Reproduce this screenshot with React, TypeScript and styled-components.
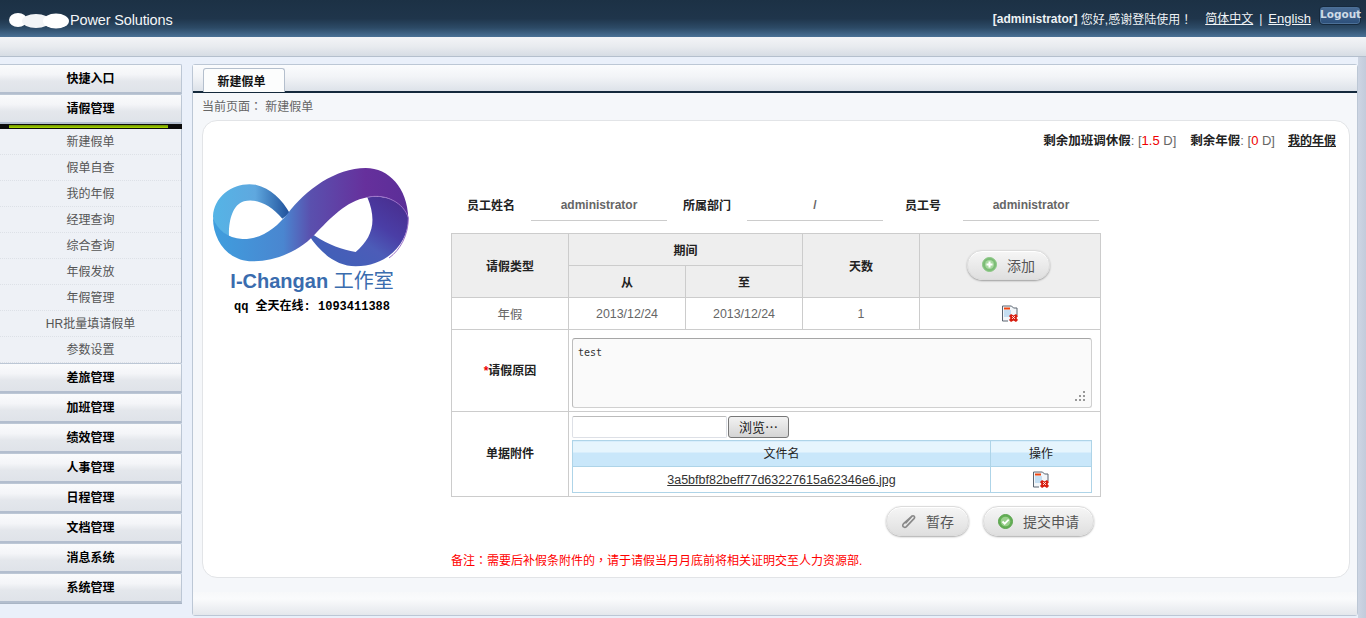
import React from "react";
import styled, { createGlobalStyle } from "styled-components";

const FONT = `"Liberation Sans", "Noto Sans CJK SC", sans-serif`;

const Global = createGlobalStyle`
  html, body { margin: 0; padding: 0; background: #eaf0fa; }
  body { font: 12px ${FONT}; color: #555; width: 1366px; height: 618px; overflow: hidden; }
  * { box-sizing: border-box; }
`;

const Page = styled.div`
  width: 1366px;
  height: 618px;
  display: flex;
  flex-direction: column;
  overflow: hidden;
`;
const Header = styled.header`
  height: 37px;
  flex: none;
  background: linear-gradient(#1c3145 0, #1f354b 50%, #2c4a66 75%, #4a7196 100%);
  display: flex;
  align-items: flex-start;
  justify-content: space-between;
  padding: 0 5px 0 8px;
  color: #fff;
`;
const Brand = styled.div`
  display: flex;
  align-items: center;
  height: 40px;
  font-size: 14.5px;
  color: #f4f6f8;
  letter-spacing: -0.15px;
`;
const Smudge = styled.svg`
  width: 62px;
  height: 18px;
  display: block;
`;
const UserBar = styled.div`
  display: flex;
  align-items: flex-start;
  font-size: 12px;
  color: #eef2f5;
  padding-top: 12px;
  line-height: 14px;
`;
const UserName = styled.b`
  font-weight: bold;
`;
const LangLink = styled.a<{ $latin?: boolean }>`
  color: #f2f5f8;
  text-decoration: underline;
  font-size: ${(p) => (p.$latin ? 13 : 12)}px;
`;
const Sep = styled.span`
  margin: 0 6px;
`;
const Greeting = styled.span`
  margin-right: 13px;
`;
const Punct = styled.span`
  font-family: "Noto Sans CJK TC", sans-serif;
`;
const Logout = styled.button`
  width: 42px;
  height: 19px;
  margin: -6px 0 0 8px;
  padding: 0 0 3px;
  border: 1px solid #15293d;
  border-radius: 4px;
  background: linear-gradient(#4a6d96, #2c4f7a);
  box-shadow: inset 0 0 0 1px #4c7097;
  color: #cfdbe6;
  font: bold 10.5px "DejaVu Sans", sans-serif;
`;
const SubBar = styled.div`
  height: 20px;
  flex: none;
  background: linear-gradient(#f3f4f7, #e8ebef 50%, #d6dce4);
  border-bottom: 1px solid #b4bfcd;
`;
const Body = styled.div`
  flex: 1;
  display: flex;
  gap: 10px;
  padding: 7px 8px 0 0;
  min-height: 0;
  background: linear-gradient(90deg, #eaf0fa 0, #eaf0fa 1358px, #cdd5e3 1358px, #c2cbdb 1366px);
`;
const Sidebar = styled.nav`
  width: 182px;
  flex: none;
  align-self: flex-start;
  border-bottom: 1px solid #a9b5c5;
`;
const Head = styled.div`
  height: 30px;
  display: flex;
  align-items: center;
  justify-content: center;
  padding-bottom: 2px;
  font-weight: bold;
  font-size: 12px;
  color: #000;
  border: 1px solid #bcc7d5;
  border-left: 0;
  border-bottom: 2px solid #b3bece;
  border-radius: 0 2px 0 0;
  background: linear-gradient(#fafbfc 0, #f4f5f8 35%, #e4e7ec 60%, #dfe3e9 100%);
`;
const ActiveBar = styled.div`
  height: 5px;
  background: #0b0b0b;
  padding: 1px 14px 1px 9px;
  &::before {
    content: "";
    display: block;
    height: 3px;
    background: linear-gradient(#6c8e00, #a8d800);
  }
`;
const SubList = styled.div`
  background: #eef1f6;
  border-right: 1px solid #b3bece;
`;
const SubItem = styled.div`
  height: 26px;
  display: flex;
  align-items: center;
  justify-content: center;
  padding-bottom: 2px;
  color: #555;
  font-size: 12px;
  border-bottom: 1px dotted #dde1e7;
`;
const Main = styled.main`
  flex: 1;
  height: 552px;
  display: flex;
  flex-direction: column;
  border: 1px solid #bcc7d5;
  border-radius: 3px;
  background: #f5f7fa;
`;
const TabBar = styled.div`
  height: 28px;
  flex: none;
  display: flex;
  align-items: flex-end;
  padding-left: 10px;
  background: linear-gradient(#fbfcfd 0, #f2f4f7 45%, #dde2e9 100%);
  border-bottom: 2px solid #14293c;
`;
const Tab = styled.div`
  width: 82px;
  height: 24px;
  margin-bottom: -1px;
  padding-right: 5px;
  display: flex;
  align-items: center;
  justify-content: center;
  font-weight: bold;
  color: #111;
  background: #fcfdfd;
  border: 1px solid #b4bfcd;
  border-bottom: 0;
  border-radius: 3px 3px 0 0;
`;
const Crumb = styled.div`
  height: 27px;
  flex: none;
  padding: 0 0 1px 9px;
  line-height: 26px;
  color: #666;
`;
const Card = styled.section`
  height: 458px;
  margin: 0 7px 0 9px;
  background: #fff;
  border: 1px solid #e2e4e7;
  border-radius: 15px;
  flex: none;
`;
const MainFoot = styled.div`
  flex: 1;
  margin-top: 14px;
  background: linear-gradient(#f7f8fa 0, #fafbfc 30%, #e4e7ec 100%);
`;
const Quota = styled.div`
  height: 47px;
  display: flex;
  justify-content: flex-end;
  align-items: flex-start;
  padding: 13px 13px 0 0;
  color: #666;
  font-size: 13px;
  line-height: 14px;
`;
const QuotaLabel = styled.b`
  color: #222;
  font-size: 12.5px;
  margin-left: 14px;
`;
const Num = styled.span`
  color: #e00;
`;
const QuotaLink = styled.a`
  color: #222;
  font-size: 12px;
  font-weight: bold;
  text-decoration: underline;
  margin-left: 13px;
`;
const Columns = styled.div`
  display: grid;
  grid-template-columns: 248px 650px;
`;
const LogoCol = styled.div`
  display: flex;
  flex-direction: column;
  align-items: center;
  width: 200px;
  margin-left: 9px;
`;
const LogoMark = styled.svg`
  display: block;
  width: 240px;
  height: 160px;
  margin: -10px 0 -50px 13px;
`;
const LogoTitle = styled.div`
  color: #3a6cae;
  font: bold 20px ${FONT};
  line-height: 24px;
  height: 24px;
  margin-top: 1px;
`;
const LogoCjk = styled.span`
  font-weight: normal;
`;
const LogoQQ = styled.div`
  color: #000;
  font: bold 12px "Liberation Mono", "Noto Sans CJK SC", monospace;
  margin-top: 7px;
  line-height: 14px;
  white-space: nowrap;
`;
const FormCol = styled.div`
  display: flex;
  flex-direction: column;
  padding-top: 20px;
`;
const InfoRow = styled.div`
  display: grid;
  grid-template-columns: 80px 136px 80px 136px 80px 136px;
  height: 33px;
  margin-bottom: 12px;
`;
const InfoLabel = styled.div`
  display: flex;
  align-items: center;
  justify-content: center;
  font-weight: bold;
  color: #222;
  padding-bottom: 1px;
`;
const InfoValue = styled.div`
  display: flex;
  align-items: center;
  justify-content: center;
  font-weight: bold;
  color: #666;
  border-bottom: 1px solid #ccc;
  padding-top: 1px;
`;
const FormTable = styled.table`
  width: 649px;
  border-collapse: collapse;
  table-layout: fixed;
  font-size: 12px;
  td, th { border: 1px solid #ccc; text-align: center; padding: 0; }
`;
const HeadCell = styled.th`
  background: #eee;
  color: #222;
  font-weight: bold;
  height: 32px;
`;
const DataCell = styled.td`
  height: 32px;
  color: #666;
  font-size: 12.4px;
`;
const SideCell = styled.th`
  font-weight: bold;
  color: #222;
  background: #fff;
  padding: 0 0 3px !important;
`;
const Star = styled.span`
  color: #e00;
`;
const PadCell = styled.td`
  padding: 4px 8px 3px 3px !important;
  text-align: left !important;
  vertical-align: top;
`;
const AreaWrap = styled.div`
  position: relative;
  height: 70px;
  margin: 4px 0 0;
`;
const Area = styled.textarea`
  display: block;
  width: 100%;
  height: 100%;
  resize: none;
  padding: 8px 5px;
  border: 1px solid #d0d0d0;
  border-top-color: #a6a6a6;
  border-left-color: #bdbdbd;
  border-radius: 3px;
  background: #fafafa;
  color: #333;
  font: 10px "DejaVu Sans Mono", monospace;
`;
const Grip = styled.svg`
  position: absolute;
  right: 6px;
  bottom: 6px;
  width: 12px;
  height: 12px;
`;
const FileRow = styled.div`
  display: flex;
  align-items: center;
  height: 22px;
  gap: 1px;
  margin-bottom: 2px;
`;
const FileInput = styled.input`
  width: 155px;
  height: 22px;
  border: 1px solid #dde0e6;
  border-top-color: #bbb;
  border-radius: 2px;
  background: #fff;
`;
const Browse = styled.button`
  width: 61px;
  height: 22px;
  padding: 0 0 2px;
  border: 1px solid #777;
  border-radius: 3px;
  background: linear-gradient(#f2f2f2, #d4d4d4);
  color: #222;
  font: 13px ${FONT};
`;
const FileTable = styled.table`
  width: 519px;
  border-collapse: collapse;
  table-layout: fixed;
  td, th { border: 1px solid #aed4e8 !important; text-align: center; padding: 0; }
`;
const FileHead = styled.th`
  height: 26px;
  padding-bottom: 2px !important;
  font-weight: normal;
  color: #222;
  background: linear-gradient(#e6f5fd 0, #e6f5fd 45%, #c9e7fa 45%, #c9e7fa 100%);
`;
const FileCell = styled.td`
  height: 26px;
  color: #444;
`;
const FileLink = styled.a`
  color: #333;
  font-size: 12.5px;
  text-decoration: underline;
`;
const Actions = styled.div`
  display: flex;
  justify-content: flex-end;
  gap: 14px;
  padding: 9px 7px 0 0;
`;
const Pill = styled.button<{ $w: number }>`
  width: ${(p) => p.$w}px;
  height: 30px;
  padding: 0;
  display: flex;
  align-items: center;
  justify-content: center;
  gap: 10px;
  border: 1px solid #dcdcdc;
  border-radius: 15px;
  background: linear-gradient(#f6f6f6, #dfdfdf);
  box-shadow: 0 1px 2px rgba(0, 0, 0, 0.35), inset 0 1px 0 #fff;
  color: #555;
  font: 14px ${FONT};
`;
const HeadPill = styled(Pill)`
  margin: -2px 0 0 47px;
`;
const Note = styled.div`
  color: #f00;
  margin-top: 16px;
  line-height: 16px;
`;
const Icon = styled.svg`
  display: inline-block;
  vertical-align: middle;
`;

const DeleteIcon = () => (
  <Icon width="18" height="17" viewBox="0 0 18 17" aria-hidden="true">
    <path d="M1.5 1h9l2 2h3.5v13H1.5z" fill="#f3f6f9" />
    <path d="M7 16H1.5V1h9l2 2h3.5v7" fill="none" stroke="#5a6470" strokeWidth="1" />
    <rect x="3" y="2.5" width="6" height="2" fill="#ee4410" />
    <rect x="3" y="5" width="7" height="7" fill="#c4def2" />
    <path d="M10 9l2.5 1.5L15 9l2 2-1.5 2 1.5 2-2 2-2.5-1.5L10 17l-2-2 1.5-2L8 11z" fill="#d81e10" />
    <path d="M11 11l3 3M14 11l-3 3" stroke="#fff" strokeWidth="0.8" />
  </Icon>
);

const PlusIcon = () => (
  <Icon width="15" height="15" viewBox="0 0 15 15" aria-hidden="true">
    <circle cx="7.5" cy="7.5" r="7" fill="#7cbc76" stroke="#8cc886" />
    <circle cx="7.5" cy="7.5" r="4.5" fill="#a8d8a0" />
    <path d="M7.5 4.5v6M4.5 7.5h6" stroke="#fff" strokeWidth="2" />
  </Icon>
);

const CheckIcon = () => (
  <Icon width="15" height="15" viewBox="0 0 15 15" aria-hidden="true">
    <circle cx="7.5" cy="7.5" r="7" fill="#63ae55" stroke="#5aa34c" />
    <circle cx="7.5" cy="7.5" r="4.8" fill="#9ad08c" />
    <path d="M4.5 7.5l2.2 2.2 4-4" stroke="#fff" strokeWidth="1.8" fill="none" />
  </Icon>
);

const ClipIcon = () => (
  <Icon width="15" height="15" viewBox="0 0 15 15" aria-hidden="true">
    <path
      d="M11.5 1.5L2.6 9.6c-1.2 1.2-1 2.5-.2 3.2.8.8 2 .8 3-.2l7.6-8c.8-.9.7-1.8.1-2.4-.7-.6-1.5-.6-2.3.2L4.6 9.2"
      fill="none"
      stroke="#888"
      strokeWidth="1.6"
    />
  </Icon>
);

const menuTop = ["快捷入口", "请假管理"];
const subItems = ["新建假单", "假单自查", "我的年假", "经理查询", "综合查询", "年假发放", "年假管理", "HR批量填请假单", "参数设置"];
const menuBottom = ["差旅管理", "加班管理", "绩效管理", "人事管理", "日程管理", "文档管理", "消息系统", "系统管理"];

export default function App() {
  return (
    <Page>
      <Global />
      <Header>
        <Brand>
          <Smudge viewBox="0 0 62 18" aria-hidden="true">
            <ellipse cx="10" cy="9" rx="9" ry="7" fill="#fff" />
            <ellipse cx="28" cy="10" rx="14" ry="7" fill="#f2f4f6" />
            <ellipse cx="48" cy="10" rx="13" ry="7.5" fill="#fff" />
          </Smudge>
          <span>Power Solutions</span>
        </Brand>
        <UserBar>
          <UserName>[administrator]</UserName>
          <Greeting>
            &nbsp;您好,感谢登陆使用<Punct>！</Punct>
          </Greeting>
          <LangLink>简体中文</LangLink>
          <Sep>|</Sep>
          <LangLink $latin>English</LangLink>
          <Logout>Logout</Logout>
        </UserBar>
      </Header>
      <SubBar />
      <Body>
        <Sidebar>
          {menuTop.map((m) => (
            <Head key={m}>{m}</Head>
          ))}
          <ActiveBar />
          <SubList>
            {subItems.map((s) => (
              <SubItem key={s}>{s}</SubItem>
            ))}
          </SubList>
          {menuBottom.map((m) => (
            <Head key={m}>{m}</Head>
          ))}
        </Sidebar>
        <Main>
          <TabBar>
            <Tab>新建假单</Tab>
          </TabBar>
          <Crumb>
            当前页面<Punct>：</Punct> 新建假单
          </Crumb>
          <Card>
            <Quota>
              <QuotaLabel>剩余加班调休假</QuotaLabel>:&nbsp;[<Num>1.5</Num>&nbsp;D]
              <QuotaLabel>剩余年假</QuotaLabel>:&nbsp;[<Num>0</Num>&nbsp;D]
              <QuotaLink>我的年假</QuotaLink>
            </Quota>
            <Columns>
              <LogoCol>
                <LogoMark viewBox="0 0 720 480" aria-hidden="true">
                  <defs>
                    <linearGradient id="lg1" x1="0" y1="0" x2="1" y2="0">
                      <stop offset="0" stopColor="#55b4e6" />
                      <stop offset="0.55" stopColor="#5fa8df" />
                      <stop offset="1" stopColor="#1f4f9a" />
                    </linearGradient>
                    <linearGradient id="lg2" x1="0" y1="0" x2="1" y2="0">
                      <stop offset="0" stopColor="#3f9ede" />
                      <stop offset="0.36" stopColor="#4a86d0" />
                      <stop offset="0.5" stopColor="#5a50ae" />
                      <stop offset="0.78" stopColor="#66309c" />
                      <stop offset="1" stopColor="#5b2e98" />
                    </linearGradient>
                    <linearGradient id="lg3" x1="0" y1="1" x2="1" y2="0">
                      <stop offset="0" stopColor="#3c62b8" />
                      <stop offset="0.45" stopColor="#4c5cb8" />
                      <stop offset="0.65" stopColor="#4a3ea6" />
                      <stop offset="1" stopColor="#492a8a" />
                    </linearGradient>
                  </defs>
                  <path
                    d="M42 175C45 110 110 70 170 80C215 90 250 125 272 165L250 182C215 140 170 120 135 130C100 140 88 190 90 238C60 215 42 200 42 175Z"
                    fill="url(#lg1)"
                  />
                  <path
                    d="M330 232L345 232C390 262 430 275 470 282C520 240 535 190 505 118C560 110 620 130 628 180C628 260 560 325 470 325C410 325 360 280 330 232Z"
                    fill="url(#lg3)"
                  />
                  <path
                    d="M42 180C55 215 85 240 130 243C190 245 235 205 265 168C320 95 410 30 500 30C570 30 625 90 628 180C615 135 560 105 505 118C440 130 395 180 345 232C300 280 230 310 160 310C90 310 42 250 42 180Z"
                    fill="url(#lg2)"
                  />
                  <path d="M505 118C560 105 615 135 628 180C628 230 605 275 570 300" fill="none" stroke="#9a70c8" strokeWidth="3" />
                </LogoMark>
                <LogoTitle>
                  I-Changan <LogoCjk>工作室</LogoCjk>
                </LogoTitle>
                <LogoQQ>qq 全天在线: 1093411388</LogoQQ>
              </LogoCol>
              <FormCol>
                <InfoRow>
                  <InfoLabel>员工姓名</InfoLabel>
                  <InfoValue>administrator</InfoValue>
                  <InfoLabel>所属部门</InfoLabel>
                  <InfoValue>/</InfoValue>
                  <InfoLabel>员工号</InfoLabel>
                  <InfoValue>administrator</InfoValue>
                </InfoRow>
                <FormTable>
                  <colgroup>
                    <col width="117" />
                    <col width="117" />
                    <col width="117" />
                    <col width="117" />
                    <col width="181" />
                  </colgroup>
                  <tbody>
                    <tr>
                      <HeadCell rowSpan={2}>请假类型</HeadCell>
                      <HeadCell colSpan={2}>期间</HeadCell>
                      <HeadCell rowSpan={2}>天数</HeadCell>
                      <HeadCell rowSpan={2}>
                        <HeadPill $w={83} type="button">
                          <PlusIcon />
                          添加
                        </HeadPill>
                      </HeadCell>
                    </tr>
                    <tr>
                      <HeadCell>从</HeadCell>
                      <HeadCell>至</HeadCell>
                    </tr>
                    <tr>
                      <DataCell>年假</DataCell>
                      <DataCell>2013/12/24</DataCell>
                      <DataCell>2013/12/24</DataCell>
                      <DataCell>1</DataCell>
                      <DataCell>
                        <DeleteIcon />
                      </DataCell>
                    </tr>
                    <tr>
                      <SideCell>
                        <Star>*</Star>请假原因
                      </SideCell>
                      <PadCell colSpan={4}>
                        <AreaWrap>
                          <Area defaultValue="test" />
                          <Grip viewBox="0 0 12 12" aria-hidden="true">
                            <path d="M9 1h2v2H9zM5 5h2v2H5zM9 5h2v2H9zM1 9h2v2H1zM5 9h2v2H5zM9 9h2v2H9z" fill="#999" />
                          </Grip>
                        </AreaWrap>
                      </PadCell>
                    </tr>
                    <tr>
                      <SideCell>单据附件</SideCell>
                      <PadCell colSpan={4}>
                        <FileRow>
                          <FileInput />
                          <Browse type="button">浏览⋯</Browse>
                        </FileRow>
                        <FileTable>
                          <colgroup>
                            <col width="418" />
                            <col width="101" />
                          </colgroup>
                          <tbody>
                            <tr>
                              <FileHead>文件名</FileHead>
                              <FileHead>操作</FileHead>
                            </tr>
                            <tr>
                              <FileCell>
                                <FileLink>3a5bfbf82beff77d63227615a62346e6.jpg</FileLink>
                              </FileCell>
                              <FileCell>
                                <DeleteIcon />
                              </FileCell>
                            </tr>
                          </tbody>
                        </FileTable>
                      </PadCell>
                    </tr>
                  </tbody>
                </FormTable>
                <Actions>
                  <Pill $w={83} type="button">
                    <ClipIcon />
                    暂存
                  </Pill>
                  <Pill $w={111} type="button">
                    <CheckIcon />
                    提交申请
                  </Pill>
                </Actions>
                <Note>
                  备注<Punct>：</Punct>需要后补假条附件的<Punct>，</Punct>请于请假当月月底前将相关证明交至人力资源部.
                </Note>
              </FormCol>
            </Columns>
          </Card>
          <MainFoot />
        </Main>
      </Body>
    </Page>
  );
}
